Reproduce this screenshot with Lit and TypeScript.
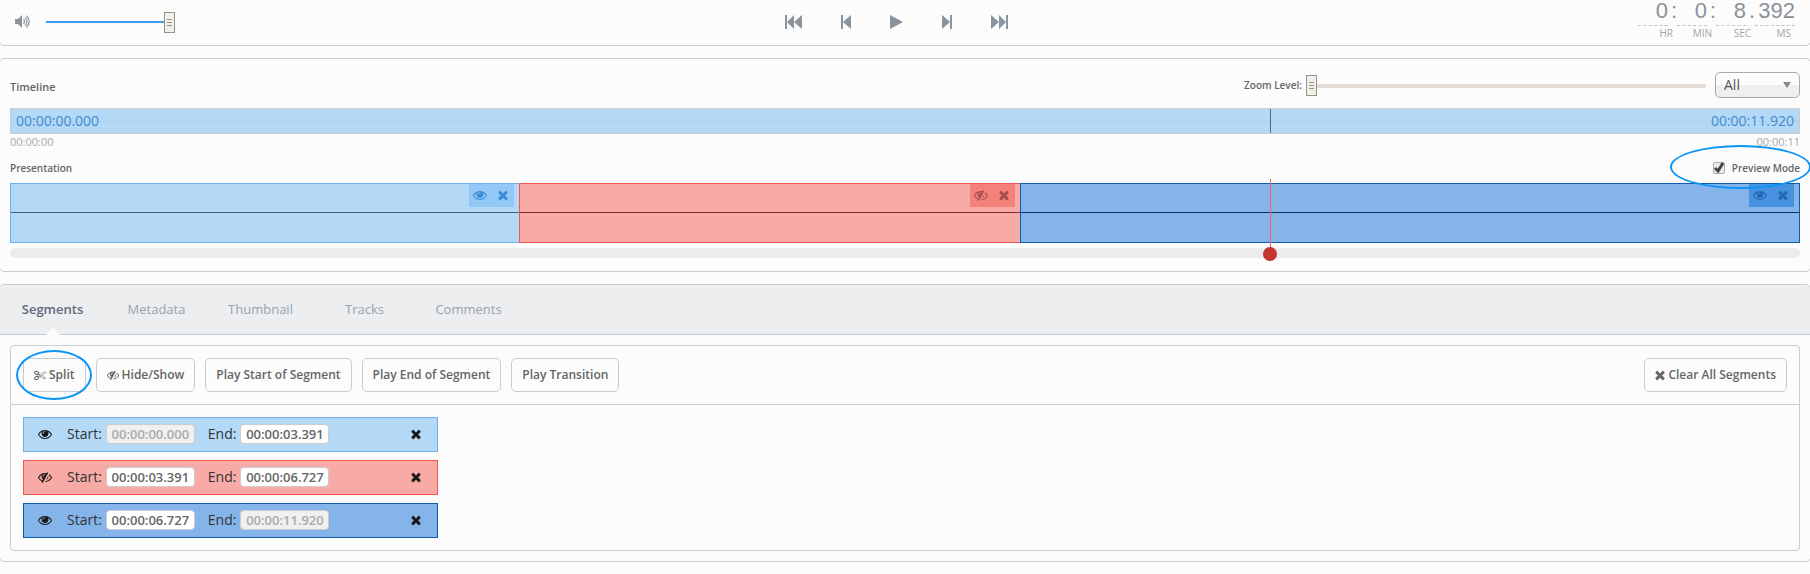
import { LitElement, html, css, svg } from "lit";
import { customElement, property, state } from "lit/decorators.js";
import { classMap } from "lit/directives/class-map.js";
import { styleMap } from "lit/directives/style-map.js";

const PATHS = {
  eye: "M1664 960q-152-236-381-353 61 104 61 225 0 185-131.5 316.5t-316.5 131.5-316.5-131.5-131.5-316.5q0-121 61-225-229 117-381 353 133 205 333.5 326.5t434.5 121.5 434.5-121.5 333.5-326.5zm-720-384q0-20-14-34t-34-14q-125 0-214.5 89.5t-89.5 214.5q0 20 14 34t34 14 34-14 14-34q0-86 61-147t147-61q20 0 34-14t14-34zm848 384q0 34-20 69-140 230-376.5 368.5t-499.5 138.5-499.5-139-376.5-368q-20-35-20-69t20-69q140-229 376.5-368t499.5-139 499.5 139 376.5 368q20 35 20 69z",
  slash:
    "M555 1335l78-141q-87-63-136-159t-49-203q0-121 61-225-229 117-381 353 167 258 427 375zm389-759q0-20-14-34t-34-14q-125 0-214.5 89.5t-89.5 214.5q0 20 14 34t34 14 34-14 14-34q0-86 61-147t147-61q20 0 34-14t14-34zm363-191q0 7-1 9-106 189-316 567t-315 566l-49 89q-10 16-28 16-12 0-134-70-16-10-16-28 0-12 44-87-143-65-263.5-173t-208.5-245q-20-31-20-69t20-69q153-235 380-371t496-136q89 0 180 17l54-97q10-16 28-16 5 0 18 6t31 15.5 33 18.5 31.5 18.5 19.5 11.5q16 10 16 27zm37 447q0 139-79 253.5t-209 164.5l280-502q8 45 8 84zm448 128q0 35-20 69-39 64-109 145-150 172-347.5 267t-419.5 95l74-132q212-18 392.5-137t301.5-307q-115-179-282-294l63-112q95 64 182.5 153t144.5 184q20 34 20 69z",
  times:
    "M1490 1322q0 40-28 68l-136 136q-28 28-68 28t-68-28l-294-294-294 294q-28 28-68 28t-68-28l-136-136q-28-28-28-68t28-68l294-294-294-294q-28-28-28-68t28-68l136-136q28-28 68-28t68 28l294 294 294-294q28-28 68-28t68 28l136 136q28 28 28 68t-28 68l-294 294 294 294q28 28 28 68z",
  cut: "M960 896q26 0 45 19t19 45-19 45-45 19-45-19-19-45 19-45 45-19zm300 64l507 398q28 20 25 56-5 35-35 51l-128 64q-13 7-29 7-17 0-31-8l-690-387-110 66q-8 4-12 5 14 49 10 97-7 77-56 147.5t-132 123.5q-132 84-277 84-136 0-222-78-90-84-79-207 7-76 56-147t131-124q132-84 278-84 83 0 151 31 9-13 22-22l122-73-122-73q-13-9-22-22-68 31-151 31-146 0-278-84-82-53-131-124t-56-147q-5-59 15.5-113t63.5-93q85-79 222-79 145 0 277 84 83 52 132 123t56 148q4 48-10 97 4 1 12 5l110 66 690-387q14-8 31-8 16 0 29 7l128 64q30 16 35 51 3 36-25 56zm-681-260q46-42 21-108t-106-117q-92-59-192-59-74 0-113 36-46 42-21 108t106 117q92 59 192 59 74 0 113-36zm-85 745q81-51 106-117t-21-108q-39-36-113-36-100 0-192 59-81 51-106 117t21 108q39 36 113 36 100 0 192-59zm178-613l96 58v-11q0-36 33-56l14-8-79-44-26 26q-3 3-10 11t-12 12q-2 2-4 3.5t-3 2.5zm224 224l96 32 736-576-128-64-768 431v113l-160 96 9 8q2 2 7 6 4 4 11 12t11 12l26 26zm704 416l128-64-520-408-177 138q-2 3-13 7z",
};

type GlyphName = keyof typeof PATHS;

@customElement("ui-glyph")
export class UiGlyph extends LitElement {
  static styles = css`
    :host { display: inline-flex; width: 14px; height: 14px; flex: none; }
    .glyph { width: 100%; height: 100%; fill: currentColor; display: block; }
  `;
  @property() name: GlyphName = "eye";
  render() {
    const box = this.name === "times" ? "256 0 1280 1792" : "0 0 1792 1792";
    return html`<svg class="glyph" viewBox=${box} aria-hidden="true">${svg`<path d=${PATHS[this.name]}></path>`}</svg>`;
  }
}

interface Segment {
  start: string;
  end: string;
  ms: number;
  tone: "light" | "red" | "deep";
  hidden: boolean;
  lockStart: boolean;
  lockEnd: boolean;
}

const DURATION = 11920;
const POSITION = 8392;

const SEGMENTS: Segment[] = [
  { start: "00:00:00.000", end: "00:00:03.391", ms: 3391, tone: "light", hidden: false, lockStart: true, lockEnd: false },
  { start: "00:00:03.391", end: "00:00:06.727", ms: 3336, tone: "red", hidden: true, lockStart: false, lockEnd: false },
  { start: "00:00:06.727", end: "00:00:11.920", ms: 5193, tone: "deep", hidden: false, lockStart: false, lockEnd: true },
];

const TRANSPORT = [
  { label: "First frame", w: 17, d: "M0 0h2v14h-2zM9 0v14l-7-7zM17 0v14l-8-7z" },
  { label: "Previous frame", w: 10, d: "M0 0h2v14h-2zM10 0v14l-8-7z" },
  { label: "Play", w: 13, d: "M0 0l13 7-13 7z" },
  { label: "Next frame", w: 10, d: "M8 0h2v14h-2zM0 0v14l8-7z" },
  { label: "Last frame", w: 17, d: "M15 0h2v14h-2zM0 0v14l8-7zM8 0v14l7-7z" },
];

const CLOCK = [
  { label: "HR", value: "0", sep: ":" },
  { label: "MIN", value: "0", sep: ":" },
  { label: "SEC", value: "8", sep: "." },
  { label: "MS", value: "392", sep: "" },
];

const TABS = ["Segments", "Metadata", "Thumbnail", "Tracks", "Comments"];

@customElement("app-root")
export class AppRoot extends LitElement {
  static styles = css`
    :host {
      display: block;
      min-height: 100vh;
      overflow: hidden;
      background: #fcfcfc;
      color: #666;
      font: 12px/16px "Open Sans", sans-serif;
    }
    * { box-sizing: border-box; }
    button, input, select { font: inherit; color: inherit; margin: 0; }
    button { padding: 0; border: 0; background: none; display: flex; align-items: center; justify-content: center; }

    .panel { border: 1px solid #c8cdd1; border-radius: 5px; margin: 0 -1px 12px; }

    /* player bar */
    .player { display: grid; grid-template-columns: 1fr auto 1fr; height: 46px; border-top: 0; border-radius: 0 0 5px 5px; padding: 0 15px; }
    .volume { display: flex; align-items: center; gap: 16px; padding-bottom: 2px; }
    .speaker { width: 15px; height: 14px; display: block; color: #8a949c; }
    .transport { display: flex; align-items: center; gap: 39px; color: #8a949c; padding: 0 18px 1px 0; }
    .transport svg { display: block; height: 14px; fill: currentColor; }
    .clock { display: flex; justify-content: flex-end; }
    .unit { display: grid; grid-template-columns: 30px 9px; align-content: start; }
    .unit:last-child { grid-template-columns: 40px; }
    .digits {
      width: 100%; height: 26px; padding: 0 0 4px; text-align: right; background: none;
      border: 0; border-bottom: 1px dashed #c0c5c9; border-radius: 0;
      font: 22px/21px "Liberation Sans", Arial, sans-serif; color: #8a919a;
    }
    .sep { font: 22px/21px "Liberation Sans", Arial, sans-serif; color: #8a919a; text-align: right; }
    .caption { grid-column: 1 / -1; font-size: 10px; line-height: 14px; text-align: right; color: #a0a5aa; padding-right: 4px; }

    /* sliders */
    .range { appearance: none; height: 22px; background: none; }
    .range::-webkit-slider-runnable-track { height: 4px; background: #e4dcd6; }
    .range::-webkit-slider-thumb {
      appearance: none; width: 11px; height: 21px; margin-top: -9px; border: 1px solid #96918a;
      background:
        linear-gradient(#96918a, #96918a) center 6px / 5px 1px no-repeat,
        linear-gradient(#96918a, #96918a) center 9px / 5px 1px no-repeat,
        linear-gradient(#96918a, #96918a) center 12px / 5px 1px no-repeat,
        #f1f0e9;
    }
    .range.level { width: 129px; height: 21px; }
    .range.level::-webkit-slider-runnable-track { height: 2px; background: #3f9bf2; }
    .range.zoom { width: 400px; height: 24px; padding-top: 2px; }

    /* timeline */
    .timeline { padding: 13px 10px; }
    .head { display: flex; align-items: center; justify-content: space-between; }
    .title { font-size: 11px; font-weight: 600; margin: 0; padding-top: 4px; }
    .zooming { display: flex; align-items: center; }
    .small { font-size: 10px; line-height: 14px; font-weight: 600; margin: 0; }
    .zooming .small { margin-right: 4px; }
    .select { position: relative; display: flex; }
    .pick {
      appearance: none; width: 85px; height: 26px; margin-left: 9px; padding: 0 8px; font-size: 14px; color: #555;
      border: 1px solid #aaa; border-radius: 5px; background: linear-gradient(#fcfcfc 50%, #efefef 51%);
    }
    .arrow { position: absolute; right: 9px; top: 10px; border: 4px solid transparent; border-top: 6px solid #888; border-bottom: 0; pointer-events: none; }
    .overview {
      position: relative; display: flex; justify-content: space-between; align-items: center; height: 26px; margin-top: 10px; padding: 0 5px;
      border: 1px solid #c8cdd1; font-size: 14px; line-height: 20px; color: #4289cf;
      background: linear-gradient(#a9d1ec, #a9d1ec) 0 12px / 100% 1px no-repeat, #b3d9f7;
    }
    .mark { position: absolute; top: 0; bottom: 0; width: 1px; background: #666; }
    .ticks { display: flex; justify-content: space-between; font-size: 11px; line-height: 16px; color: #a8a8a8; }
    .subhead { display: flex; justify-content: space-between; align-items: center; margin-top: 10px; height: 16px; }
    .preview { display: flex; align-items: center; gap: 7px; }
    .tick {
      appearance: none; width: 12px; height: 12px; border: 1px solid #a9a9a9; border-radius: 2px; background: #ececec;
    }
    .check { position: relative; display: grid; }
    .checkmark { position: absolute; left: 1px; top: 0; width: 10px; height: 11px; fill: none; stroke: #444; stroke-width: 3; pointer-events: none; }
    .stage { position: relative; margin-top: 7px; }
    .strip { display: flex; height: 60px; }
    .clip {
      flex: none; display: flex; justify-content: flex-end; align-items: flex-start; padding-right: 5px;
      border: 1px solid var(--edge); border-right-width: 0;
      background: linear-gradient(var(--wave), var(--wave)) 0 28px / 100% 1px no-repeat, var(--fill);
    }
    .clip:last-child { border-right-width: 1px; }
    .light { --fill: #b3d9f7; --edge: #70aeee; --wave: #3d617f; --tool: #93c7f5; --ink: #3a8bd8; }
    .red { --fill: #f8aaa7; --edge: #f05652; --wave: #7c2c2c; --tool: #f5817b; --ink: #a64e4c; }
    .deep { --fill: #84b4e9; --edge: #0f5cae; --wave: #083468; --tool: #4791e1; --ink: #2569b4; }
    .tools { display: flex; align-items: center; gap: 11px; height: 23px; padding: 0 6px 1px 4px; background: var(--tool); color: var(--ink); }
    ui-glyph[name="times"] { width: 10px; }
    .scrub { height: 10px; margin-top: 5px; border-radius: 5px; background: #ececec; }
    .head-line { position: absolute; top: -4px; bottom: 8px; width: 1px; background: #ff5f58; }
    .knob { position: absolute; left: -7px; bottom: -11px; width: 14px; height: 14px; border-radius: 50%; background: #c33530; }

    /* tabs */
    .tabs { display: flex; height: 50px; background: #eceeef; border-bottom: 1px solid #c4cdd5; border-radius: 4px 4px 0 0; }
    .tab { position: relative; width: 104px; font-size: 13px; color: #98a3ae; padding: 0 0 1px 1px; }
    .tab.on { color: #5f6b7c; font-weight: 600; }
    .tab.on::after { content: ""; position: absolute; left: 46px; bottom: -1px; border: 7px solid transparent; border-top: 0; border-bottom-color: #fcfcfc; }
    .work { padding: 10px; }
    .box { border: 1px solid #c8cdd1; border-radius: 4px; }
    .bar { display: flex; gap: 10px; padding: 12px; height: 59px; border-bottom: 1px solid #c8cdd1; }
    .btn { height: 34px; padding: 0 10px; gap: 3px; border: 1px solid #c4cdd5; border-radius: 5px; font-weight: 600; white-space: nowrap; }
    .btn ui-glyph { width: 12px; height: 12px; }
    .btn ui-glyph[name="times"] { width: 10px; height: 14px; }
    .clear { margin-left: auto; }
    .rows { display: flex; flex-direction: column; gap: 8px; padding: 12px; }
    .row {
      display: flex; align-items: center; width: 415px; height: 35px; padding: 0 16px 2px 14px;
      border: 1px solid var(--edge); background: var(--fill); color: #333; font-size: 14px;
    }
    .row button { color: #1a1a1a; }
    .field { display: flex; align-items: center; gap: 4px; margin-left: 13px; }
    .row button + .field { margin-left: 15px; }
    .time {
      width: 89px; height: 20px; padding: 0 4px; text-align: center; border: 1px solid #ccc; border-radius: 4px; background: #fff;
      font-size: 13px; line-height: 18px; font-weight: 600; color: #666;
    }
    .time:disabled { background: #f0f0f0; color: #aaa; }
    .remove { margin-left: auto; }

    /* highlight rings */
    .ringed { position: relative; display: flex; }
    .ring { position: absolute; border: 2px solid #0b93f6; border-radius: 50%; pointer-events: none; }
    .ring-split { left: -7px; right: -6px; top: -8px; bottom: -8px; }
    .ring-preview { left: -43px; right: -11px; top: -16px; bottom: -14px; z-index: 1; }
  `;

  @state() private tab = "Segments";

  private clip(s: Segment) {
    return html`<div class="clip ${s.tone}" style=${styleMap({ width: `${(s.ms / DURATION) * 100}%` })}>
      <div class="tools">
        <button aria-label="Toggle segment"><ui-glyph name=${s.hidden ? "slash" : "eye"}></ui-glyph></button>
        <button aria-label="Remove segment"><ui-glyph name="times"></ui-glyph></button>
      </div>
    </div>`;
  }

  private row(s: Segment) {
    return html`<div class="row ${s.tone}">
      <button aria-label="Toggle segment"><ui-glyph name=${s.hidden ? "slash" : "eye"}></ui-glyph></button>
      <label class="field">Start: <input class="time" type="text" .value=${s.start} ?disabled=${s.lockStart} /></label>
      <label class="field">End: <input class="time" type="text" .value=${s.end} ?disabled=${s.lockEnd} /></label>
      <button class="remove" aria-label="Remove segment"><ui-glyph name="times"></ui-glyph></button>
    </div>`;
  }

  render() {
    const at = `${(POSITION / DURATION) * 100}%`;
    return html`
      <section class="panel player">
        <div class="volume">
          <svg class="speaker" viewBox="0 0 15 14" aria-hidden="true">
            <path fill="currentColor" d="M0 4h3l4-4v13l-4-4h-3z"></path>
            <path fill="none" stroke="currentColor" stroke-width="1.2" d="M8.5 4.200q2 2.300 0 4.600M10 2.300q4 4.200 0 8.400M11.500 .6q5.500 5.900 0 11.800"></path>
          </svg>
          <input class="range level" type="range" aria-label="Volume" value="100" />
        </div>
        <div class="transport">
          ${TRANSPORT.map(
            (t) => html`<button aria-label=${t.label}><svg width=${t.w} height="14" viewBox="0 0 ${t.w} 14"><path d=${t.d}></path></svg></button>`
          )}
        </div>
        <div class="clock">
          ${CLOCK.map(
            (c) => html`<div class="unit">
              <input class="digits" id=${c.label} type="text" .value=${c.value} />
              ${c.sep ? html`<span class="sep">${c.sep}</span>` : ""}
              <label class="caption" for=${c.label}>${c.label}</label>
            </div>`
          )}
        </div>
      </section>

      <section class="panel timeline">
        <div class="head">
          <h2 class="title">Timeline</h2>
          <div class="zooming">
            <label class="small" for="zoom">Zoom Level:</label>
            <input class="range zoom" id="zoom" type="range" value="0" />
            <div class="select">
              <select class="pick" aria-label="Zoom range"><option>All</option></select>
              <span class="arrow"></span>
            </div>
          </div>
        </div>
        <div class="overview">
          <span>00:00:00.000</span><span>00:00:11.920</span>
          <i class="mark" style=${styleMap({ left: at })}></i>
        </div>
        <div class="ticks"><span>00:00:00</span><span>00:00:11</span></div>
        <div class="subhead">
          <h3 class="small">Presentation</h3>
          <div class="ringed">
            <label class="preview small">
              <span class="check">
                <input class="tick" type="checkbox" checked />
                <svg class="checkmark" viewBox="0 0 10 11"><path d="M1 6l3 3 5-8"></path></svg>
              </span>
              Preview Mode
            </label>
            <span class="ring ring-preview"></span>
          </div>
        </div>
        <div class="stage">
          <div class="strip">${SEGMENTS.map((s) => this.clip(s))}</div>
          <div class="scrub"></div>
          <div class="head-line" style=${styleMap({ left: at })}><span class="knob"></span></div>
        </div>
      </section>

      <section class="panel">
        <nav class="tabs">
          ${TABS.map(
            (t) => html`<button class=${classMap({ tab: true, on: t === this.tab })} @click=${() => (this.tab = t)}>${t}</button>`
          )}
        </nav>
        <div class="work">
          <div class="box">
            <div class="bar">
              <div class="ringed">
                <button class="btn"><ui-glyph name="cut"></ui-glyph>Split</button>
                <span class="ring ring-split"></span>
              </div>
              <button class="btn"><ui-glyph name="slash"></ui-glyph>Hide/Show</button>
              <button class="btn">Play Start of Segment</button>
              <button class="btn">Play End of Segment</button>
              <button class="btn">Play Transition</button>
              <button class="btn clear"><ui-glyph name="times"></ui-glyph>Clear All Segments</button>
            </div>
            <div class="rows">${SEGMENTS.map((s) => this.row(s))}</div>
          </div>
        </div>
      </section>
    `;
  }
}
